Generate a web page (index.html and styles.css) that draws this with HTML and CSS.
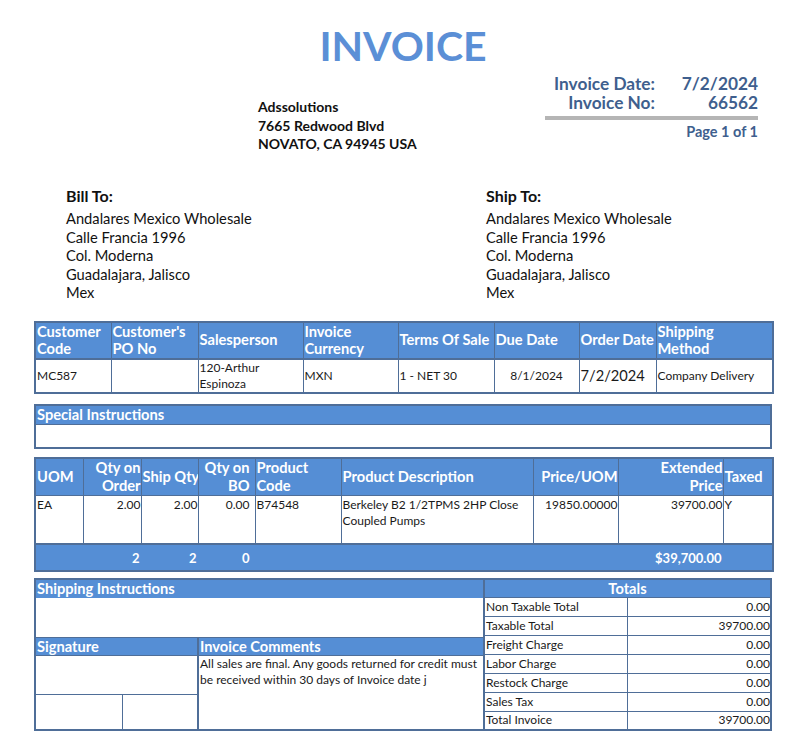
FILE: index.html
```html
<!DOCTYPE html>
<html>
<head>
<meta charset="utf-8">
<link rel="stylesheet" href="styles.css">
</head>
<body>
<div class="page">
  <div class="title">INVOICE</div>
  <div class="head-row">
    <div class="company">
      <div>Adssolutions</div>
      <div>7665 Redwood Blvd</div>
      <div>NOVATO, CA 94945 USA</div>
    </div>
    <div class="meta">
      <div class="meta-grid">
        <div class="meta-label">Invoice Date:</div><div class="meta-val">7/2/2024</div>
        <div class="meta-label">Invoice No:</div><div class="meta-val">66562</div>
      </div>
      <div class="meta-bar"></div>
      <div class="meta-page">Page 1 of 1</div>
    </div>
  </div>

  <div class="addr-row">
    <div class="addr">
      <div class="addr-title">Bill To:</div>
      <div>Andalares Mexico Wholesale</div>
      <div>Calle Francia 1996</div>
      <div>Col. Moderna</div>
      <div>Guadalajara, Jalisco</div>
      <div>Mex</div>
    </div>
    <div class="addr">
      <div class="addr-title">Ship To:</div>
      <div>Andalares Mexico Wholesale</div>
      <div>Calle Francia 1996</div>
      <div>Col. Moderna</div>
      <div>Guadalajara, Jalisco</div>
      <div>Mex</div>
    </div>
  </div>

  <table class="grid info">
    <colgroup>
      <col style="width:76px"><col style="width:87px"><col style="width:105px"><col style="width:95px">
      <col style="width:96px"><col style="width:85px"><col style="width:77px"><col style="width:117px">
    </colgroup>
    <tr class="hrow">
      <th>Customer Code</th><th>Customer's PO No</th><th>Salesperson</th><th>Invoice Currency</th>
      <th class="nowrap">Terms Of Sale</th><th>Due Date</th><th class="nowrap">Order Date</th><th>Shipping<br>Method</th>
    </tr>
    <tr class="drow">
      <td>MC587</td><td></td><td>120-Arthur Espinoza</td><td>MXN</td>
      <td>1 - NET 30</td><td class="center">8/1/2024</td><td class="big">7/2/2024</td><td>Company Delivery</td>
    </tr>
  </table>

  <table class="grid special">
    <tr class="srow"><th>Special Instructions</th></tr>
    <tr class="sbody"><td></td></tr>
  </table>

  <table class="grid products">
    <colgroup>
      <col style="width:48px"><col style="width:58px"><col style="width:57px"><col style="width:57px">
      <col style="width:86px"><col style="width:192px"><col style="width:85px"><col style="width:105px"><col style="width:50px">
    </colgroup>
    <tr class="phead">
      <th>UOM</th><th class="right">Qty on Order</th><th class="nowrap">Ship Qty</th><th class="right pad">Qty on BO</th>
      <th>Product Code</th><th>Product Description</th><th class="right">Price/UOM</th><th class="right">Extended<br>Price</th><th>Taxed</th>
    </tr>
    <tr class="prow">
      <td>EA</td><td class="right">2.00</td><td class="right">2.00</td><td class="right pad">0.00</td>
      <td>B74548</td><td>Berkeley B2 1/2TPMS 2HP Close Coupled Pumps</td><td class="right">19850.00000</td><td class="right">39700.00</td><td>Y</td>
    </tr>
    <tr class="pfoot">
      <th></th><th class="right">2</th><th class="right">2</th><th class="right pad">0</th>
      <th></th><th></th><th></th><th class="right">$39,700.00</th><th></th>
    </tr>
  </table>

  <div class="bottom">
    <div class="left">
      <div class="bhead">Shipping Instructions</div>
      <div class="ship-body"></div>
      <div class="split">
        <div class="sig">
          <div class="bhead">Signature</div>
          <div class="sig-body"></div>
          <div class="sig-cells"><div class="sig-cell"></div><div class="sig-cell"></div></div>
        </div>
        <div class="comments">
          <div class="bhead">Invoice Comments</div>
          <div class="comment-text">All sales are final. Any goods returned for credit must be received within 30 days of Invoice date j</div>
        </div>
      </div>
    </div>
    <table class="totals">
      <colgroup><col style="width:143px"><col style="width:144px"></colgroup>
      <tr class="thead"><th colspan="2">Totals</th></tr>
      <tr><td>Non Taxable Total</td><td class="right">0.00</td></tr>
      <tr><td>Taxable Total</td><td class="right">39700.00</td></tr>
      <tr><td>Freight Charge</td><td class="right">0.00</td></tr>
      <tr><td>Labor Charge</td><td class="right">0.00</td></tr>
      <tr><td>Restock Charge</td><td class="right">0.00</td></tr>
      <tr><td>Sales Tax</td><td class="right">0.00</td></tr>
      <tr><td>Total Invoice</td><td class="right">39700.00</td></tr>
    </table>
  </div>
</div>
</body>
</html>
```
FILE: styles.css
```css
* { box-sizing: border-box; }
html, body { margin: 0; padding: 0; background: #fff; }
body {
  font-family: Lato, "Open Sans", sans-serif;
  color: #1a1a1a;
  width: 809px;
  height: 737px;
  overflow: hidden;
}
.page { padding: 0 37px 0 34px; }

.title {
  margin-top: 21px;
  height: 50px;
  line-height: 50px;
  text-align: center;
  font-size: 41px;
  font-weight: 700;
  color: #5b8fd6;
}

.head-row { display: flex; align-items: flex-start; height: 84px; }
.company {
  margin-left: 224px;
  margin-top: 27px;
  font-size: 14px;
  font-weight: 700;
  line-height: 18.7px;
  color: #111;
}
.meta { margin-left: auto; margin-right: 14px; margin-top: 3px; width: 213px; }
.meta-grid {
  display: grid;
  grid-template-columns: 110px 103px;
  font-size: 17.3px;
  font-weight: 700;
  line-height: 19px;
  color: #3f5f8e;
}
.meta-label, .meta-val { text-align: right; }
.meta-bar { margin-top: 4px; height: 4px; background: #b5b5b5; }
.meta-page {
  margin-top: 3px;
  text-align: right;
  font-size: 14.5px;
  font-weight: 700;
  line-height: 17px;
  color: #3f5f8e;
}

.addr-row { display: flex; margin-top: 32px; padding-left: 32px; }
.addr { flex: 0 0 420px; font-size: 14.7px; line-height: 18.5px; color: #111; }
.addr + .addr { flex: 1 1 auto; }
.addr-title { font-size: 16px; font-weight: 700; line-height: 18px; height: 22px; }

.grid {
  border-collapse: collapse;
  table-layout: fixed;
  width: 738px;
  border: 2px solid #4f6e98;
}
.grid th, .grid td {
  border: 1px solid #4f6e98;
  padding: 0 1px;
  overflow: hidden;
}
.grid th {
  background: #558ed5;
  color: #fff;
  font-weight: 700;
  text-align: left;
  font-size: 14.67px;
  line-height: 17.5px;
}
.grid td { font-size: 12px; line-height: 16px; }
.right { text-align: right !important; }
.center { text-align: center; }
.nowrap { white-space: nowrap; }
.grid td.big { font-size: 14.67px; }

.info { margin-top: 19px; }
.info .hrow th { height: 37px; border-bottom-width: 2px; }
.info .drow td { height: 32px; vertical-align: middle; }

.special { margin-top: 10px; }
.special .srow th { height: 20px; line-height: 17px; }
.special .sbody td { height: 23px; }

.products { margin-top: 8px; }
.products .phead th { height: 38px; vertical-align: middle; }
.products .phead th.right { padding-right: 0; }
.products .prow td { height: 48px; vertical-align: top; padding-top: 1px; }
.products .prow td.right { padding-right: 0; }
.products .pfoot th { height: 27px; border-left-color: #558ed5; border-right-color: #558ed5; border-top-width: 2px; font-size: 13px; vertical-align: middle; padding-top: 4px; }
.products th.pad, .products td.pad, .products .phead th.pad, .products .prow td.pad { padding-right: 5px; }

.bottom { display: flex; margin-top: 6px; width: 738px; }
.left {
  width: 449px;
  border: 2px solid #4f6e98;
  border-right: 0;
  display: flex;
  flex-direction: column;
}
.bhead {
  background: #558ed5;
  color: #fff;
  font-weight: 700;
  font-size: 14.67px;
  line-height: 18px;
  height: 18px;
  padding: 0 1px;
  white-space: nowrap;
}
.ship-body { height: 40px; border-bottom: 1px solid #4f6e98; }
.split { display: flex; flex: 1; }
.sig { width: 163px; display: flex; flex-direction: column; border-right: 2px solid #4f6e98; }
.sig .bhead { border-bottom: 1px solid #4f6e98; }
.sig-body { height: 39px; border-bottom: 1px solid #4f6e98; }
.sig-cells { flex: 1; display: flex; }
.sig-cell { width: 86px; }
.sig-cell + .sig-cell { flex: 1; border-left: 1px solid #4f6e98; }
.comments { flex: 1; display: flex; flex-direction: column; }
.comments .bhead { border-bottom: 1px solid #4f6e98; }
.comment-text { font-size: 12px; line-height: 16px; padding: 0 1px; }

.totals {
  border-collapse: collapse;
  table-layout: fixed;
  width: 289px;
  border: 2px solid #4f6e98;
}
.totals th {
  background: #558ed5;
  color: #fff;
  font-weight: 700;
  font-size: 14.67px;
  height: 18px;
  line-height: 17px;
  text-align: center;
  padding: 0;
  border: 1px solid #4f6e98;
}
.totals td {
  border: 1px solid #4f6e98;
  font-size: 12px;
  height: 19px;
  line-height: 16px;
  padding: 0 1px;
  vertical-align: middle;
}
.totals td.right { padding-right: 0; }
```
